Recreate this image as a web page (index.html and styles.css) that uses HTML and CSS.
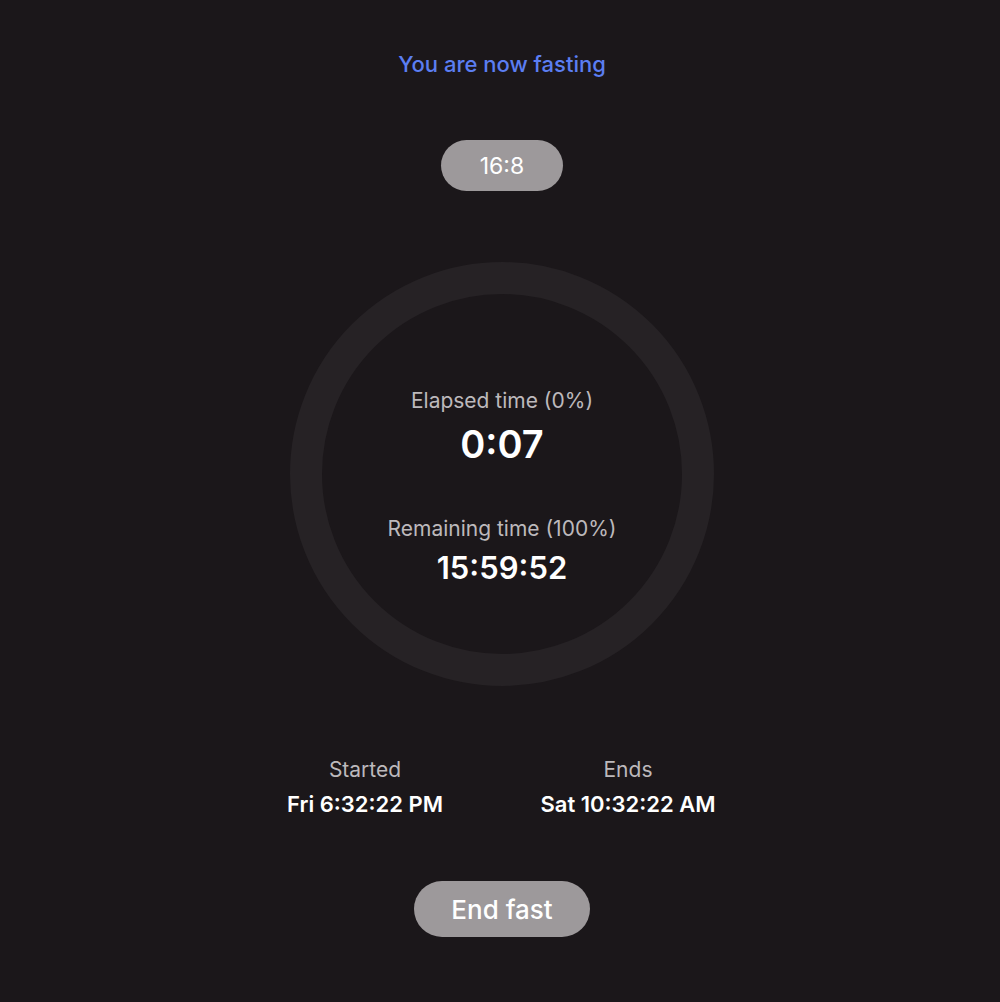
FILE: index.html
```html
<!DOCTYPE html>
<html>
<head>
<meta charset="utf-8">
<link rel="stylesheet" href="styles.css">
</head>
<body>
<main class="screen">
  <h1 class="title">You are now fasting</h1>
  <div class="plan-pill">16:8</div>
  <div class="ring">
    <div class="stat">
      <div class="stat-label">Elapsed time (0%)</div>
      <div class="stat-value big">0:07</div>
    </div>
    <div class="stat">
      <div class="stat-label">Remaining time (100%)</div>
      <div class="stat-value">15:59:52</div>
    </div>
  </div>
  <div class="times">
    <div class="time-col">
      <div class="time-label">Started</div>
      <div class="time-value">Fri 6:32:22 PM</div>
    </div>
    <div class="time-col">
      <div class="time-label">Ends</div>
      <div class="time-value">Sat 10:32:22 AM</div>
    </div>
  </div>
  <button class="end-btn">End fast</button>
</main>
</body>
</html>
```
FILE: styles.css
```css
html, body {
  margin: 0;
  padding: 0;
  background: #1b171a;
}
body {
  font-family: Inter, "Noto Sans", "Liberation Sans", sans-serif;
  color: #ffffff;
}
.screen {
  width: 1000px;
  height: 1002px;
  display: flex;
  flex-direction: column;
  align-items: center;
  box-sizing: border-box;
  padding-top: 50px;
}
.title {
  margin: 0;
  font-size: 22px;
  font-weight: 500;
  color: #5b7ef2;
  line-height: 28px;
  padding-left: 4px;
}
.plan-pill {
  margin-top: 62px;
  width: 122px;
  height: 51px;
  border-radius: 26px;
  background: #9d999b;
  color: #fff;
  font-size: 23px;
  font-weight: 400;
  display: flex;
  align-items: center;
  justify-content: center;
  margin-left: 4px;
}
.ring {
  margin-top: 71px;
  width: 424px;
  height: 424px;
  box-sizing: border-box;
  border: 32px solid #262225;
  border-radius: 50%;
  display: flex;
  flex-direction: column;
  align-items: center;
  padding-top: 94px;
  gap: 50px;
  margin-left: 4px;
}
.stat {
  display: flex;
  flex-direction: column;
  align-items: center;
}
.stat-label {
  font-size: 21px;
  color: #bdb9bc;
  line-height: 26px;
}
.stat-value {
  font-size: 31px;
  font-weight: 600;
  line-height: 36px;
  margin-top: 8px;
}
.stat-value.big {
  font-size: 38px;
  line-height: 44px;
  margin-top: 8px;
}
.times {
  margin-top: 71px;
  display: grid;
  grid-template-columns: 230px 230px;
  column-gap: 33px;
  margin-right: 7px;
}
.time-col {
  display: flex;
  flex-direction: column;
  align-items: center;
}
.time-label {
  font-size: 21px;
  color: #bdb9bc;
  line-height: 26px;
}
.time-value {
  font-size: 22px;
  font-weight: 600;
  line-height: 26px;
  margin-top: 8px;
}
.end-btn {
  margin-top: 64px;
  width: 176px;
  height: 56px;
  border: none;
  border-radius: 28px;
  background: #9d999b;
  color: #fff;
  font-family: inherit;
  font-size: 26px;
  font-weight: 500;
  margin-left: 4px;
}
```
